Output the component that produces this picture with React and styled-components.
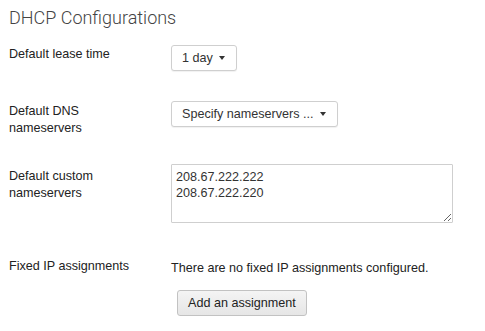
import styled, { createGlobalStyle } from "styled-components";

const GlobalStyle = createGlobalStyle`
  body {
    margin: 0;
    background: #fff;
    font-family: "Liberation Sans", Arial, sans-serif;
    color: #333;
  }
  * {
    box-sizing: border-box;
  }
`;

const Page = styled.div`
  padding: 7px 9px 0 9px;
`;

const Title = styled.h2`
  margin: 0;
  font-family: Roboto, "Liberation Sans", sans-serif;
  font-weight: 300;
  font-size: 18px;
  line-height: 22px;
  color: #444;
`;

const Row = styled.div`
  display: flex;
  align-items: flex-start;
  margin-top: ${(p) => p.$top}px;
`;

const Label = styled.div`
  width: 162px;
  flex-shrink: 0;
  font-size: 12.6px;
  line-height: 17px;
  color: #222;
  padding-top: ${(p) => p.$pad || 0}px;
`;

const Value = styled.div`
  display: flex;
  flex-direction: column;
  align-items: flex-start;
`;

const Dropdown = styled.button`
  display: flex;
  align-items: center;
  gap: 6px;
  height: 26px;
  padding: 0 11px 0 10px;
  background: #fff;
  border: 1px solid #cfcfcf;
  border-radius: 3px;
  box-shadow: 0 1px 1px rgba(0, 0, 0, 0.06);
  font-family: "Liberation Sans", Arial, sans-serif;
  font-size: 12.6px;
  color: #333;
  cursor: pointer;
`;

const Caret = styled.span`
  width: 0;
  height: 0;
  margin-top: -1px;
  border-left: 3px solid transparent;
  border-right: 3px solid transparent;
  border-top: 4px solid #333;
`;

const Servers = styled.textarea`
  width: 282px;
  height: 59px;
  padding: 4px;
  border: 1px solid #cfcfcf;
  border-radius: 1px;
  font-family: "Liberation Sans", Arial, sans-serif;
  font-size: 12.6px;
  line-height: 16px;
  color: #333;
  outline: none;
`;

const Note = styled.div`
  font-size: 12.6px;
  line-height: 17px;
  color: #222;
  padding-top: 2px;
`;

const AddButton = styled.button`
  margin: 13px 0 0 6px;
  height: 26px;
  padding: 0 10px;
  border: 1px solid #c2c2c2;
  border-radius: 3px;
  background: linear-gradient(#f4f4f4, #e6e6e6);
  font-family: "Liberation Sans", Arial, sans-serif;
  font-size: 12.6px;
  color: #222;
  cursor: pointer;
`;

const App = () => {
  return (
    <>
      <GlobalStyle />
      <Page>
        <Title>DHCP Configurations</Title>
        <Row $top={16}>
          <Label $pad={1}>Default lease time</Label>
          <Value>
            <Dropdown>
              1 day <Caret />
            </Dropdown>
          </Value>
        </Row>
        <Row $top={30}>
          <Label $pad={2}>
            Default DNS
            <br />
            nameservers
          </Label>
          <Value>
            <Dropdown>
              Specify nameservers ... <Caret />
            </Dropdown>
          </Value>
        </Row>
        <Row $top={27}>
          <Label $pad={4}>
            Default custom
            <br />
            nameservers
          </Label>
          <Value>
            <Servers defaultValue={"208.67.222.222\n208.67.222.220"} />
          </Value>
        </Row>
        <Row $top={35}>
          <Label>Fixed IP assignments</Label>
          <Value>
            <Note>There are no fixed IP assignments configured.</Note>
            <AddButton>Add an assignment</AddButton>
          </Value>
        </Row>
      </Page>
    </>
  );
};

export default App;
